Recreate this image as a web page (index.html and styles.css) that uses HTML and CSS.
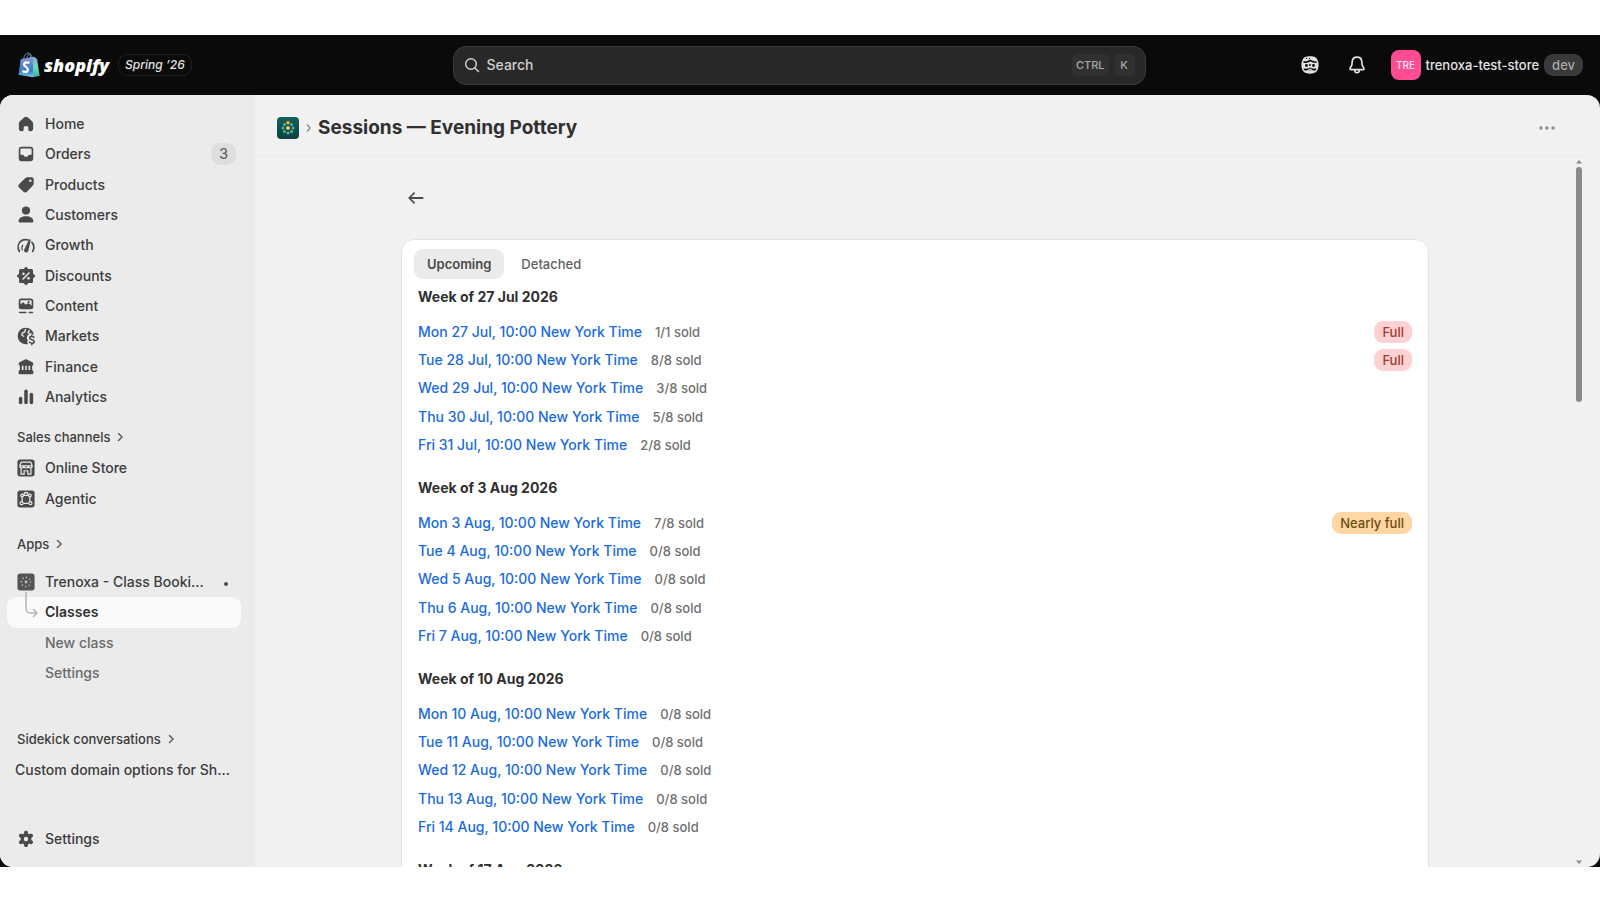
FILE: index.html
```html
<!DOCTYPE html>
<html lang="en">
<head>
    <meta charset="UTF-8">
    <meta name="viewport" content="width=device-width, initial-scale=1.0">
    <title>Sessions — Evening Pottery</title>
    <link rel="stylesheet" href="styles.css">
</head>
<body>
    <div class="app">
        <header class="topbar">
            <div class="brand">
                <a href="#" class="logo">
                    <svg width="22" height="26" viewBox="0 0 22 26">
                        <defs>
                            <linearGradient id="bag" x1="0" y1="0" x2="0" y2="1">
                                <stop offset="0" stop-color="#8aa0cf"/>
                                <stop offset="0.35" stop-color="#5d86cd"/>
                                <stop offset="0.7" stop-color="#2f7fc4"/>
                                <stop offset="1" stop-color="#7ed0ea"/>
                            </linearGradient>
                            <linearGradient id="bagSide" x1="0" y1="0" x2="0" y2="1">
                                <stop offset="0" stop-color="#93a5d8"/>
                                <stop offset="0.5" stop-color="#6fdcb4"/>
                                <stop offset="1" stop-color="#3fa9b0"/>
                            </linearGradient>
                        </defs>
                        <path d="M5.5 7.500C6 3.500 8 1 10 1c1.800 0 2.600 2.500 2.700 5M8.500 6.500C9.500 3 11 1.500 12.200 2c1.200.6 1.600 2 1.800 4" fill="none" stroke="#7186b8" stroke-width="1"/>
                        <path d="M2.700 7.300 15 4.800v20.500L.6 22.800z" fill="url(#bag)"/>
                        <path d="M15 4.800l2 .4 2.100 2 2.500 16.600L15 25.300z" fill="url(#bagSide)"/>
                        <path d="M11.400 11c-.8-.5-1.600-.7-2.500-.7-1.700 0-2.800.9-2.800 2.200 0 2.500 3.700 2.300 3.700 4.900 0 1.500-1 2.500-2.600 2.500-1.100 0-2.100-.4-2.700-1.100" fill="none" stroke="#fff" stroke-width="2.300"/>
                    </svg>
                    <span class="wordmark">shopify</span>
                </a>
                <span class="edition">Spring ’26</span>
            </div>

            <button class="search">
                <svg class="icon" viewBox="0 0 20 20" fill="none" stroke="currentColor" stroke-width="1.500" stroke-linecap="round"><circle cx="9" cy="9" r="5.300"/><path d="M13 13l3.500 3.500"/></svg>
                <span>Search</span>
                <kbd>CTRL</kbd>
                <kbd>K</kbd>
            </button>

            <div class="account">
                <button class="icon-btn" aria-label="Sidekick">
                    <svg class="icon" viewBox="0 0 20 20"><path d="M10 2c3.800 0 6.600 1.200 7 4.200.6 1 .8 2.200.8 3.800 0 5-2.500 7.900-7.800 7.900S2.200 15 2.200 10c0-1.600.2-2.800.8-3.800C3.400 3.200 6.200 2 10 2z" fill="#e3e3e3"/><path d="M4 7.500c2.800 0 5-.6 6.200-1.700 1.300 1.100 3.300 1.700 5.800 1.700" fill="none" stroke="#0a0a0a" stroke-width="1.300"/><path d="M6.300 4.200 7.500 3.600M9 4.500l1-.6" stroke="#0a0a0a" stroke-width=".9"/><circle cx="6.800" cy="10.500" r="1.300" fill="#0a0a0a"/><circle cx="13.200" cy="10.500" r="1.300" fill="#0a0a0a"/><path d="M9 9.300h2l-.5 1.600h-1zM4 13c1.600.7 3.600.5 5-.6h2c1.400 1.100 3.400 1.300 5 .6-.4 1-.9 1.700-1.600 2.300l-2.500-.8a6 6 0 0 1-3.800 0l-2.500.8C4.900 14.700 4.400 14 4 13z" fill="#0a0a0a"/><path d="M8.300 13.600c1.100.4 2.300.4 3.400 0" fill="none" stroke="#e3e3e3" stroke-width="1"/></svg>
                </button>
                <button class="icon-btn" aria-label="Notifications">
                    <svg class="icon" viewBox="0 0 20 20" fill="none" stroke="#e3e3e3" stroke-width="1.500" stroke-linejoin="round"><path d="M10 2.800c-2.500 0-4.200 1.900-4.400 4.300l-.2 2.300c-.1.700-.3 1.300-.7 1.900l-.9 1.300c-.5.700 0 1.600.8 1.600h10.800c.8 0 1.300-.9.800-1.600l-.9-1.300c-.4-.6-.6-1.200-.7-1.900l-.2-2.300C14.200 4.700 12.500 2.800 10 2.800z"/><path d="M8 14.300v.7a2 2 0 0 0 4 0v-.7"/></svg>
                </button>
                <button class="store">
                    <span class="avatar">TRE</span>
                    <span class="store-name">trenoxa-test-store</span>
                    <span class="env">dev</span>
                </button>
            </div>
        </header>

        <div class="frame">
            <nav class="sidebar">
                <ul class="nav nav-main">
                    <li><a href="#">
                        <svg class="icon" viewBox="0 0 20 20"><path d="M8.600 3.900a2.200 2.200 0 0 1 2.800 0l3.900 3.300c.8.700 1.200 1.600 1.200 2.600v4.500c0 1.200-.9 2.200-2.200 2.200h-1c-.7 0-1.200-.5-1.200-1.200v-2.200c0-.6-.5-1.100-1.100-1.100H9c-.6 0-1.100.5-1.100 1.100v2.200c0 .7-.5 1.200-1.200 1.200h-1c-1.300 0-2.200-1-2.200-2.200V9.800c0-1 .4-1.900 1.200-2.600z"/></svg>
                        <span>Home</span></a></li>
                    <li><a href="#">
                        <svg class="icon" viewBox="0 0 20 20"><path fill-rule="evenodd" d="M6 3.500h8a2.600 2.600 0 0 1 2.600 2.600v7.800a2.600 2.600 0 0 1-2.600 2.600H6a2.600 2.600 0 0 1-2.600-2.600V6.100A2.600 2.600 0 0 1 6 3.500zM6 5c-.6 0-1.100.5-1.100 1.100v4.500h1.900c.6 0 1 .3 1.200.8l.2.500c.2.500.6.700 1.100.7h1.400c.5 0 .9-.2 1.100-.7l.2-.5c.2-.5.6-.8 1.200-.8h1.900V6.100c0-.6-.5-1.100-1.100-1.100z"/></svg>
                        <span>Orders</span><em class="count">3</em></a></li>
                    <li><a href="#">
                        <svg class="icon" viewBox="0 0 20 20"><path fill-rule="evenodd" d="M11.500 3H15a2 2 0 0 1 2 2v3.300c0 .9-.4 1.700-1 2.400l-4.900 5.200a2.500 2.500 0 0 1-3.600.1L3.900 12.600a2.500 2.500 0 0 1 0-3.500L9 4.100A3.600 3.600 0 0 1 11.500 3zM14 7.200a1.100 1.100 0 1 0 0-2.200 1.100 1.100 0 0 0 0 2.200z"/></svg>
                        <span>Products</span></a></li>
                    <li><a href="#">
                        <svg class="icon" viewBox="0 0 20 20"><circle cx="10" cy="6" r="3.700"/><path d="M3.300 15.600c0-2.700 3-4.400 6.700-4.400s6.700 1.700 6.700 4.400c0 .7-.5 1.200-1.200 1.200h-11c-.7 0-1.200-.5-1.200-1.200z"/></svg>
                        <span>Customers</span></a></li>
                    <li><a href="#">
                        <svg class="icon" viewBox="0 0 20 20"><path d="M3.900 15.800C2 12 2.900 8.200 5.800 6.200c2-1.300 4.100-1.400 5.900-.8M15.400 7.600c2 2.300 2.300 5.200.7 8.200" fill="none" stroke="currentColor" stroke-width="1.600" stroke-linecap="round"/><path d="M6.600 14.500c-.7-1.700-.5-3.200.4-4.300" fill="none" stroke="currentColor" stroke-width="1.200" stroke-linecap="round"/><path d="M13.700 4.700c.5.100.7.500.6 1L12.200 15c-.3 1.300-1.300 2-2.400 1.800-1.300-.3-1.900-1.400-1.400-2.700L12.800 5.100c.2-.3.500-.5.900-.4z"/></svg>
                        <span>Growth</span></a></li>
                    <li><a href="#">
                        <svg class="icon" viewBox="0 0 20 20"><path d="M10 2.200 12 4.200h2.900c.6 0 1 .4 1 1V8l2 2-2 2v2.900c0 .6-.4 1-1 1H12l-2 2-2-2H5.200c-.6 0-1-.4-1-1V12l-2-2 2-2V5.200c0-.6.4-1 1-1H8z" stroke="currentColor" stroke-width="1" stroke-linejoin="round"/><path d="M7.300 12.700l5.400-5.400" stroke="#ebebeb" stroke-width="1.400" stroke-linecap="round"/><circle cx="7.700" cy="7.900" r="1.100" fill="#ebebeb"/><circle cx="12.300" cy="12.100" r="1.100" fill="#ebebeb"/></svg>
                        <span>Discounts</span></a></li>
                    <li><a href="#">
                        <svg class="icon" viewBox="0 0 20 20"><path fill-rule="evenodd" d="M5.700 3.200h8.600a2.300 2.300 0 0 1 2.300 2.300v5.200a2.300 2.300 0 0 1-2.300 2.300H5.700a2.300 2.300 0 0 1-2.300-2.300V5.500a2.300 2.300 0 0 1 2.300-2.300zM4.900 8.300l1.500-1.100c.6-.4 1.300-.4 1.800.1l1.600 1.500 1.600-1c.6-.4 1.300-.3 1.800.2l1.900 1.700V5.500c0-.4-.4-.8-.8-.8H5.700c-.4 0-.8.400-.8.800z"/><circle cx="12.400" cy="6.400" r="1"/><path d="M4.200 15.900h5.600M13 15.900h2.800" stroke="currentColor" stroke-width="1.500" stroke-linecap="round"/></svg>
                        <span>Content</span></a></li>
                    <li><a href="#">
                        <svg class="icon" viewBox="0 0 20 20"><path d="M10 2.600c-4.300 0-7.500 3.200-7.500 7.400s3.200 7.500 7.500 7.500c.7 0 1.300-.1 1.900-.3-1-1-1-2.300-.1-3.100-.9-1-1.200-2.200-.9-3.500.300-1 1-1.800 1.900-2.200.5-1.100 2.300-1.200 3.200-.1l1.200.500A7.500 7.500 0 0 0 10 2.600z"/><path d="M9.700 3.600 8.700 6.300 6.500 7.500l-.2 1.800 2 1.200M13.300 4.700l-1.500 2.100 1.500 1" fill="none" stroke="#ebebeb" stroke-width="1.200"/><path d="M17.200 11.200c-.5-.6-1.200-.8-2-.8-1.100 0-1.900.6-1.900 1.500 0 2.100 4.200.9 4.200 3.100 0 1-.9 1.600-2.100 1.600-.9 0-1.700-.3-2.200-1M15.300 9v1.400M15.300 16.600V18" fill="none" stroke="currentColor" stroke-width="1.400" stroke-linecap="round"/></svg>
                        <span>Markets</span></a></li>
                    <li><a href="#">
                        <svg class="icon" viewBox="0 0 20 20"><path fill-rule="evenodd" d="M9.200 3.100c.5-.3 1.100-.3 1.600 0l5 2.600c.5.200.8.700.8 1.300v.8c0 .6-.4 1-1 1v4l.6.300c.3.200.5.500.5.900v1.600c0 .6-.5 1.100-1.100 1.100H4.400c-.6 0-1.100-.5-1.100-1.100V14c0-.4.200-.7.500-.9l.6-.3v-4c-.6 0-1-.4-1-1V7c0-.6.3-1.100.8-1.300zM6.200 8.800v3.900h1.500V8.800zm3.100 0v3.900h1.400V8.800zm3 0v3.900h1.500V8.800z"/></svg>
                        <span>Finance</span></a></li>
                    <li><a href="#">
                        <svg class="icon" viewBox="0 0 20 20"><rect x="8.400" y="3.200" width="3.200" height="13.300" rx="1.500"/><rect x="3.500" y="9.800" width="3.200" height="6.700" rx="1.500"/><rect x="13.300" y="6.200" width="3.200" height="10.300" rx="1.500"/></svg>
                        <span>Analytics</span></a></li>
                </ul>

                <a href="#" class="section-title">Sales channels
                    <svg width="12" height="12" viewBox="0 0 12 12"><path d="M4.500 2.500 8 6l-3.500 3.500"/></svg></a>
                <ul class="nav nav-channels">
                    <li><a href="#">
                        <svg class="icon" viewBox="0 0 20 20"><rect x="2.200" y="2.200" width="15.600" height="15.600" rx="2.500"/><path d="M5.500 4.700h9M5.500 4.700 4.300 8.500c0 .9.700 1.500 1.800 1.500 1 0 1.900-.6 1.900-1.500 0 .9.900 1.500 2 1.500s2-.6 2-1.500c0 .9.900 1.500 1.900 1.500 1.100 0 1.800-.6 1.800-1.500l-1.200-3.800M4.300 8h11.400M5.500 10.200v5.300h2.800v-3h3.400v3h2.800v-5.300" fill="none" stroke="#ebebeb" stroke-width="1.100"/></svg>
                        <span>Online Store</span></a></li>
                    <li><a href="#">
                        <svg class="icon" viewBox="0 0 20 20"><rect x="2.200" y="2.200" width="15.600" height="15.600" rx="2.500"/><g fill="none" stroke="#ebebeb" stroke-width="1.100"><path d="M7.800 6.700h4.400M7.800 14h4.400M6.500 8v4.500M13.500 8v4.500M8 6.300 8.600 4.500h2.800l.6 1.800M10 4.500v-1"/><circle cx="6.500" cy="6.800" r="1.200"/><circle cx="13.500" cy="6.800" r="1.200"/><circle cx="6" cy="13.800" r="1.400"/><circle cx="14" cy="13.800" r="1.400"/></g></svg>
                        <span>Agentic</span></a></li>
                </ul>

                <a href="#" class="section-title">Apps
                    <svg width="12" height="12" viewBox="0 0 12 12"><path d="M4.500 2.500 8 6l-3.500 3.500"/></svg></a>
                <ul class="nav nav-apps">
                    <li><a href="#">
                        <svg class="icon" viewBox="0 0 20 20"><rect x="2.200" y="2.200" width="15.600" height="15.600" rx="2.500" fill="#555"/><circle cx="10" cy="10" r="1.300" fill="#c4c4c4"/><circle cx="10" cy="10" r="4.200" fill="none" stroke="#b5b5b5" stroke-width="1.500" stroke-linecap="round" stroke-dasharray="0 3.300"/></svg>
                        <span class="ellipsis">Trenoxa - Class Booking</span><i class="dot"></i></a></li>
                    <li><a href="#" class="sub selected">
                        <svg class="branch" width="14" height="26" viewBox="0 0 14 26"><path d="M1 0v17a4 4 0 0 0 4 4h7M8.500 17.500 12 21l-3.500 3.500"/></svg>
                        <span>Classes</span></a></li>
                    <li><a href="#" class="sub"><span>New class</span></a></li>
                    <li><a href="#" class="sub"><span>Settings</span></a></li>
                </ul>

                <a href="#" class="section-title">Sidekick conversations
                    <svg width="12" height="12" viewBox="0 0 12 12"><path d="M4.500 2.500 8 6l-3.500 3.500"/></svg></a>
                <ul class="nav nav-chats">
                    <li><a href="#"><span class="ellipsis">Custom domain options for Shopify</span></a></li>
                </ul>

                <ul class="nav nav-bottom">
                    <li><a href="#">
                        <svg class="icon" viewBox="0 0 20 20"><path fill-rule="evenodd" d="M8.400 3.600c.1-.6.600-1 1.200-1h.8c.6 0 1.100.4 1.200 1l.3 1.500 1 .6 1.500-.5c.6-.2 1.200 0 1.500.5l.4.700c.3.500.2 1.200-.3 1.600l-1.200 1v1.900l1.200 1c.5.4.6 1.100.3 1.600l-.4.700c-.3.500-.9.700-1.500.5l-1.500-.5-1 .6-.3 1.500c-.1.600-.6 1-1.200 1h-.8c-.6 0-1.100-.4-1.200-1l-.3-1.500-1-.6-1.500.5c-.6.200-1.200 0-1.500-.5l-.4-.7c-.3-.5-.2-1.200.3-1.600l1.200-1V9l-1.200-1c-.5-.4-.6-1.100-.3-1.600l.4-.7c.3-.5.900-.7 1.500-.5l1.500.5 1-.6zM10 12a2 2 0 1 0 0-4 2 2 0 0 0 0 4z"/></svg>
                        <span>Settings</span></a></li>
                </ul>
            </nav>

            <main class="main">
                <div class="title-bar">
                    <svg width="22" height="22" viewBox="0 0 22 22">
                        <defs>
                            <linearGradient id="tile" x1="0" y1="0" x2="0" y2="1">
                                <stop offset="0" stop-color="#14605b"/>
                                <stop offset="1" stop-color="#0b413f"/>
                            </linearGradient>
                        </defs>
                        <rect width="22" height="22" rx="4" fill="url(#tile)"/>
                        <g fill="#4fb3a0"><circle cx="14.500" cy="7.500" r="1.500"/><circle cx="16" cy="11" r="1.500"/><circle cx="14.500" cy="14.500" r="1.500"/><circle cx="11" cy="16" r="1.500"/><circle cx="7.500" cy="14.500" r="1.500"/><circle cx="6" cy="11" r="1.500"/><circle cx="7.500" cy="7.500" r="1.500"/></g>
                        <circle cx="11" cy="5.700" r="1.800" fill="#f2b134"/>
                        <circle cx="11" cy="11" r="2.100" fill="#f7b955"/>
                    </svg>
                    <svg class="crumb" width="7" height="10" viewBox="0 0 7 10"><path d="M2 1.500 5 5 2 8.500"/></svg>
                    <h1>Sessions — Evening Pottery</h1>
                    <button class="icon-btn more" aria-label="More actions">
                        <svg class="icon" viewBox="0 0 20 20" fill="#8a8a8a"><circle cx="4.500" cy="10" r="1.500"/><circle cx="10" cy="10" r="1.500"/><circle cx="15.500" cy="10" r="1.500"/></svg>
                    </button>
                </div>

                <div class="scroll">
                    <div class="page">
                        <a href="#" class="back" aria-label="Back">
                            <svg class="icon" viewBox="0 0 20 20" fill="none" stroke="#4a4a4a" stroke-width="1.600" stroke-linecap="round" stroke-linejoin="round"><path d="M16 10H4.200M8.300 5.500 3.800 10l4.500 4.500"/></svg>
                        </a>

                        <div class="card">
                            <div class="tabs">
                                <button class="tab active">Upcoming</button>
                                <button class="tab">Detached</button>
                            </div>

                            <section class="week">
                                <h2>Week of 27 Jul 2026</h2>
                                <ul class="sessions">
                                    <li><a href="#">Mon 27 Jul, 10:00 New York Time</a><span class="sold">1/1 sold</span><span class="badge full">Full</span></li>
                                    <li><a href="#">Tue 28 Jul, 10:00 New York Time</a><span class="sold">8/8 sold</span><span class="badge full">Full</span></li>
                                    <li><a href="#">Wed 29 Jul, 10:00 New York Time</a><span class="sold">3/8 sold</span></li>
                                    <li><a href="#">Thu 30 Jul, 10:00 New York Time</a><span class="sold">5/8 sold</span></li>
                                    <li><a href="#">Fri 31 Jul, 10:00 New York Time</a><span class="sold">2/8 sold</span></li>
                                </ul>
                            </section>

                            <section class="week">
                                <h2>Week of 3 Aug 2026</h2>
                                <ul class="sessions">
                                    <li><a href="#">Mon 3 Aug, 10:00 New York Time</a><span class="sold">7/8 sold</span><span class="badge nearly">Nearly full</span></li>
                                    <li><a href="#">Tue 4 Aug, 10:00 New York Time</a><span class="sold">0/8 sold</span></li>
                                    <li><a href="#">Wed 5 Aug, 10:00 New York Time</a><span class="sold">0/8 sold</span></li>
                                    <li><a href="#">Thu 6 Aug, 10:00 New York Time</a><span class="sold">0/8 sold</span></li>
                                    <li><a href="#">Fri 7 Aug, 10:00 New York Time</a><span class="sold">0/8 sold</span></li>
                                </ul>
                            </section>

                            <section class="week">
                                <h2>Week of 10 Aug 2026</h2>
                                <ul class="sessions">
                                    <li><a href="#">Mon 10 Aug, 10:00 New York Time</a><span class="sold">0/8 sold</span></li>
                                    <li><a href="#">Tue 11 Aug, 10:00 New York Time</a><span class="sold">0/8 sold</span></li>
                                    <li><a href="#">Wed 12 Aug, 10:00 New York Time</a><span class="sold">0/8 sold</span></li>
                                    <li><a href="#">Thu 13 Aug, 10:00 New York Time</a><span class="sold">0/8 sold</span></li>
                                    <li><a href="#">Fri 14 Aug, 10:00 New York Time</a><span class="sold">0/8 sold</span></li>
                                </ul>
                            </section>

                            <section class="week">
                                <h2>Week of 17 Aug 2026</h2>
                            </section>
                        </div>
                    </div>

                    <div class="scrollbar">
                        <svg width="6" height="4" viewBox="0 0 6 4"><path d="M3 0l3 3.500H0z"/></svg>
                        <div class="track"><div class="thumb"></div></div>
                        <svg width="6" height="4" viewBox="0 0 6 4"><path d="M3 4 0 .5h6z"/></svg>
                    </div>
                </div>
            </main>
        </div>
    </div>
</body>
</html>
```
FILE: styles.css
```css
* {
    box-sizing: border-box;
}
body {
    margin: 0;
    height: 100vh;
    padding: 35px 0 33px;
    background: #fff;
    font-family: Inter, "Liberation Sans", sans-serif;
    font-size: 14px;
    font-weight: 500;
    line-height: 20px;
    color: #303030;
}
a {
    color: inherit;
    text-decoration: none;
}
ul {
    list-style: none;
    margin: 0;
    padding: 0;
}
button {
    font: inherit;
    color: inherit;
    background: none;
    border: none;
    padding: 0;
    cursor: pointer;
}
.icon {
    width: 22px;
    height: 22px;
    flex: none;
    display: block;
}
.app {
    height: 100%;
    display: flex;
    flex-direction: column;
    background: #0a0a0a;
}

/* top bar */
.topbar {
    height: 60px;
    flex: none;
    display: grid;
    grid-template-columns: 1fr minmax(0, 693px) 1fr;
    align-items: center;
    padding: 0 17px 0 15px;
    color: #e3e3e3;
}
.brand, .logo {
    display: flex;
    align-items: center;
}
.brand {
    gap: 9px;
    padding-left: 3px;
}
.logo {
    gap: 4px;
}
.wordmark {
    font-family: "Open Sans", sans-serif;
    font-size: 18px;
    font-weight: 800;
    font-style: italic;
    color: #fff;
}
.edition {
    padding: 0 6px;
    border: 1px solid #202020;
    border-radius: 9px;
    font-size: 12px;
    font-style: italic;
}
.search {
    height: 39px;
    display: flex;
    align-items: center;
    gap: 5px;
    padding: 0 10px 0 8px;
    border: 1px solid #3a3a3a;
    border-radius: 13px;
    background: #282828;
    color: #cfcfcf;
    text-align: left;
}
.search .icon {
    width: 20px;
    height: 20px;
}
.search span {
    flex: 1;
}
kbd {
    min-width: 21px;
    padding: 1px 4px;
    border-radius: 5px;
    background: #303030;
    font-family: inherit;
    font-size: 11px;
    text-align: center;
    color: #a8a8a8;
}
.account {
    display: flex;
    align-items: center;
    justify-content: flex-end;
    gap: 21px;
}
.icon-btn {
    padding: 2px;
}
.store {
    display: flex;
    align-items: center;
    gap: 5px;
}
.store-name, .env {
    font-size: 13px;
}
.avatar {
    width: 30px;
    height: 30px;
    border-radius: 8px;
    background: #ff4c93;
    color: #ffe3ee;
    font-size: 10px;
    line-height: 30px;
}
.env {
    padding: 1px 8px;
    border-radius: 9px;
    background: #3a3a3a;
    color: #a8a8a8;
}

/* frame */
.frame {
    flex: 1;
    min-height: 0;
    display: flex;
    border-radius: 13px;
    overflow: hidden;
    background: #f1f1f1;
}
.sidebar {
    width: 255px;
    flex: none;
    display: flex;
    flex-direction: column;
    padding: 14px 14px 13px 7px;
    background: #ebebeb;
    color: #3c3c3c;
    font-weight: 550;
}
.nav {
    display: grid;
    grid-template-columns: minmax(0, 1fr);
    grid-auto-rows: 1fr;
}
.nav a {
    height: 100%;
    display: flex;
    align-items: center;
    gap: 8px;
    padding: 0 5px 0 8px;
    border-radius: 9px;
}
.nav .icon {
    fill: #4a4a4a;
    color: #4a4a4a;
}
.nav-main {
    height: 303px;
    margin-bottom: 15px;
}
.nav-channels {
    height: 61px;
    margin-bottom: 20px;
}
.nav-apps {
    height: 121px;
    margin: 7px 0 41px;
}
.nav-chats {
    height: 30px;
}
.nav-bottom {
    height: 30px;
    margin-top: auto;
}
.count {
    margin-left: auto;
    padding: 1px 8px;
    border-radius: 9px;
    background: #dedede;
    color: #616161;
    font-style: normal;
}
.section-title {
    display: flex;
    align-items: center;
    gap: 4px;
    padding-left: 10px;
    height: 20px;
    font-size: 13px;
    margin-bottom: 6px;
}
.section-title svg {
    fill: none;
    stroke: #616161;
    stroke-width: 1.5;
    stroke-linecap: round;
}
.ellipsis {
    overflow: hidden;
    white-space: nowrap;
    text-overflow: ellipsis;
}
.nav-apps .ellipsis {
    width: 162px;
}
.dot {
    width: 4px;
    height: 4px;
    margin: 4px 8px 0 auto;
    border-radius: 50%;
    background: #4a4a4a;
}
.nav .sub {
    position: relative;
    padding-left: 38px;
    color: #6a6a6a;
}
.nav .selected {
    background: #fafafa;
    color: #303030;
    font-weight: 600;
}
.branch {
    position: absolute;
    left: 18px;
    top: -5px;
    fill: none;
    stroke: #b5b5b5;
    stroke-width: 1.5;
    stroke-linecap: round;
}

/* page */
.main {
    flex: 1;
    min-width: 0;
    display: flex;
    flex-direction: column;
}
.title-bar {
    height: 62px;
    flex: none;
    display: flex;
    align-items: center;
    gap: 6px;
    margin-right: 16px;
    padding: 4px 24px 0 22px;
    border-bottom: 1px solid #ebebeb;
}
.crumb {
    fill: none;
    stroke: #8a8a8a;
    stroke-width: 1.3;
}
h1 {
    flex: 1;
    margin: 0;
    font-size: 19px;
    font-weight: 650;
    line-height: 26px;
}
.scroll {
    flex: 1;
    min-height: 0;
    display: flex;
    overflow: hidden;
}
.page {
    flex: 1;
    max-width: 1028px;
    margin: 0 auto;
    padding-top: 30px;
}
.back {
    display: block;
    width: 28px;
    padding: 0 4px;
}
.card {
    margin-top: 30px;
    padding: 9px 16px;
    border: 1px solid #e3e3e3;
    border-radius: 13px;
    background: #fff;
}
.tabs {
    display: flex;
    gap: 4px;
    margin: 0 -4px 8px;
}
.tab {
    height: 30px;
    padding: 0 13px;
    border-radius: 9px;
    font-size: 13px;
    font-weight: 550;
    color: #616161;
}
.tab.active {
    background: #ebebeb;
    color: #4a4a4a;
    font-weight: 600;
}
.week {
    margin-bottom: 19px;
}
h2 {
    margin: 0 0 11px;
    font-size: 14px;
    font-weight: 650;
    line-height: 20px;
}
.sessions {
    display: grid;
    grid-auto-rows: 1fr;
    height: 141px;
}
.sessions li {
    display: flex;
    align-items: center;
    gap: 13px;
}
.sessions a {
    color: #1a6bdc;
}
.sold {
    font-size: 13px;
    font-weight: 450;
    color: #707070;
}
.badge {
    margin-left: auto;
    padding: 1px 8px;
    border-radius: 9px;
    font-size: 13px;
    font-weight: 550;
}
.full {
    background: #fed1d3;
    color: #a03a30;
}
.nearly {
    background: #ffd6a4;
    color: #6b4d10;
}
.scrollbar {
    width: 25px;
    display: flex;
    flex-direction: column;
    align-items: center;
    padding: 3px 18px 3px 0;
    fill: #8a8a8a;
}
.track {
    flex: 1;
    margin: 3px 0;
}
.thumb {
    width: 6px;
    height: 34%;
    border-radius: 3px;
    background: #8a8a8a;
}
```
